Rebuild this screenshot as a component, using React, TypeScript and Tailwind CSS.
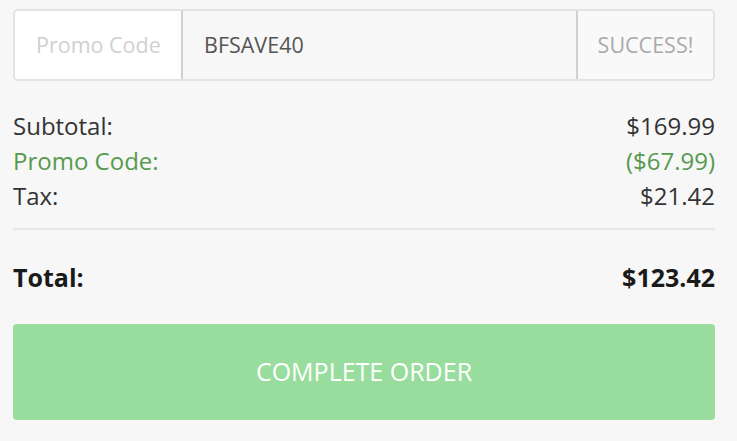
import { useState } from 'react'

const rows = [
    { label: 'Subtotal:', value: '$169.99', green: false },
    { label: 'Promo Code:', value: '($67.99)', green: true },
    { label: 'Tax:', value: '$21.42', green: false },
]

const App = () => {
    const [code, setCode] = useState('BFSAVE40')

    return (
        <div className="min-h-screen bg-[#f7f7f7] pl-[13px] pt-[9px] font-['Open_Sans',sans-serif]">
            <div className="w-[702px]">
                <div className="flex h-[72px] rounded-[5px] border-2 border-[#e3e3e3] overflow-hidden">
                    <div className="w-[166px] shrink-0 bg-white flex items-center pl-[21px] whitespace-nowrap text-[21.5px] text-[#d0d0d0]">
                        Promo Code
                    </div>
                    <input
                        value={code}
                        onChange={(e) => setCode(e.target.value)}
                        className="flex-1 min-w-0 bg-[#f7f7f7] border-x-2 border-[#d0d0d0] px-[21px] text-[21.5px] text-[#555555] outline-0"
                    />
                    <div className="w-[135px] shrink-0 bg-[#f9f9f9] flex items-center justify-center whitespace-nowrap text-[21.5px] text-[#aaaaaa]">
                        SUCCESS!
                    </div>
                </div>

                <div className="mt-[27px]">
                    {rows.map((row) => (
                        <div
                            key={row.label}
                            className={`flex justify-between text-[24px] leading-[35px] ${row.green ? 'text-[#569a4f]' : 'text-[#333333]'}`}
                        >
                            <span>{row.label}</span>
                            <span>{row.value}</span>
                        </div>
                    ))}
                </div>

                <div className="mt-[15px] h-[2px] bg-[#e6e6e6]" />

                <div className="mt-[30px] flex justify-between text-[25px] leading-[35px] font-bold text-[#1a1a1a]">
                    <span>Total:</span>
                    <span>$123.42</span>
                </div>

                <button className="mt-[29px] w-full h-[96px] rounded-[4px] bg-[#98dd9e] text-white text-[25px] uppercase">
                    Complete Order
                </button>
            </div>
        </div>
    )
}

export default App
